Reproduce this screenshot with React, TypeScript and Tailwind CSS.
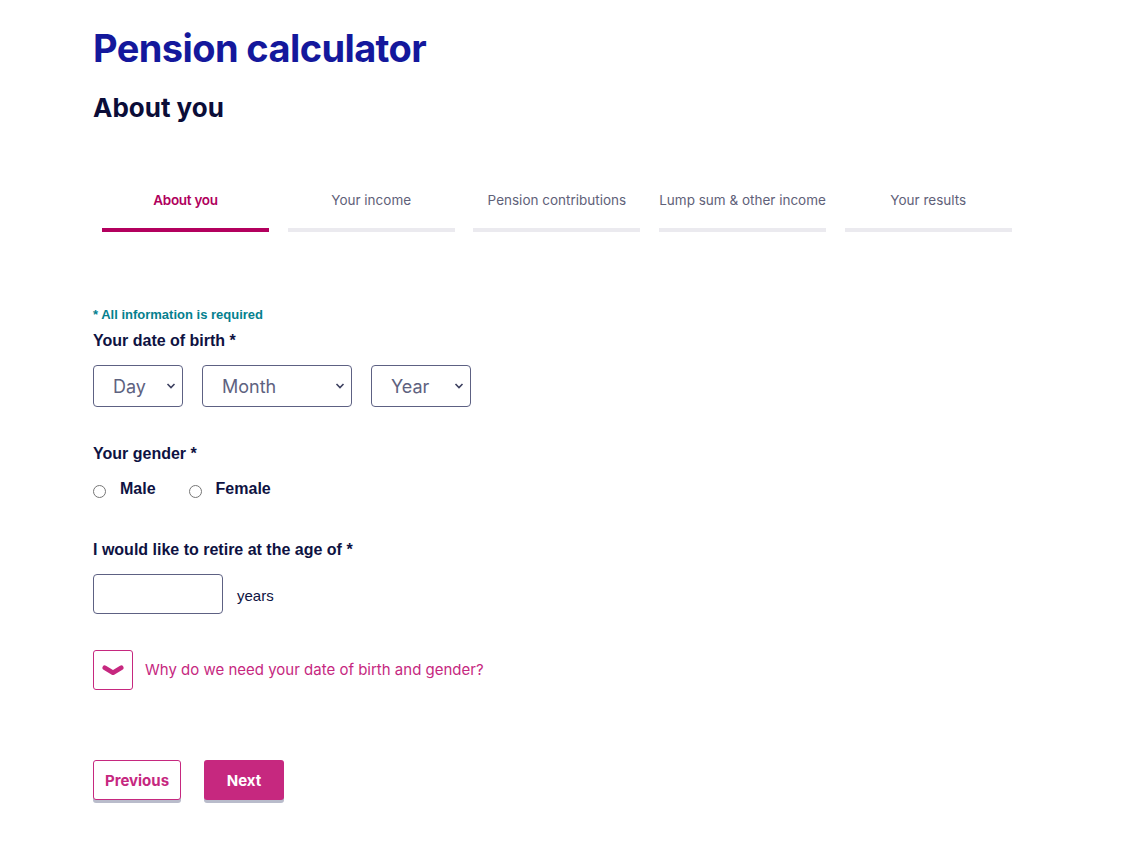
import { useState } from 'react'

const steps = ['About you', 'Your income', 'Pension contributions', 'Lump sum & other income', 'Your results']

const days = Array.from({ length: 31 }, (_, i) => String(i + 1))
const months = ['January', 'February', 'March', 'April', 'May', 'June', 'July', 'August', 'September', 'October', 'November', 'December']
const years = Array.from({ length: 60 }, (_, i) => String(2005 - i))

const heading = "font-['Inter',sans-serif]"
const label = "font-['Liberation_Sans',Arial,sans-serif] font-bold text-[16px] text-[#0e1242]"

function Select({ placeholder, options, width }: { placeholder: string; options: string[]; width: string }) {
  return (
    <div className={`relative ${width}`}>
      <select
        defaultValue=""
        className={`h-[42px] w-full appearance-none rounded-[4px] border border-[#5d6183] bg-white pl-[19px] pr-7 text-[18px] text-[#5e6280] ${heading} outline-none`}
      >
        <option value="" disabled>
          {placeholder}
        </option>
        {options.map((o) => (
          <option key={o}>{o}</option>
        ))}
      </select>
      <svg
        className="pointer-events-none absolute right-[7px] top-[17px] h-[8px] w-[10px]"
        viewBox="0 0 10 8"
        fill="none"
        stroke="#3d4160"
        strokeWidth="1.6"
      >
        <path d="M1.5 2 L5 5.5 L8.5 2" />
      </svg>
    </div>
  )
}

export default function App() {
  const [gender, setGender] = useState('')
  const [open, setOpen] = useState(false)

  return (
    <div className="min-h-[859px] w-full bg-white">
      <div className="pl-[93px] pt-[25px]">
        <h1 className={`${heading} text-[38px] font-bold leading-[46px] tracking-[-0.6px] text-[#14189c]`}>
          Pension calculator
        </h1>
        <h2 className={`${heading} mt-[21px] text-[26px] font-bold leading-[32px] text-[#0b0d38]`}>About you</h2>

        <div className="ml-[9px] mt-[68px] flex w-[910px] gap-[18.7px]">
          {steps.map((s, i) => (
            <div key={s} className="flex w-[167px] flex-col items-center">
              <span
                className={`${heading} text-[13.5px] leading-[16px] ${
                  i === 0 ? 'font-semibold tracking-[-0.3px] text-[#b0005c]' : 'text-[#5f6179]'
                }`}
              >
                {s}
              </span>
              <div className={`mt-[20px] h-[4px] w-full ${i === 0 ? 'bg-[#b3005e]' : 'bg-[#ebeaef]'}`} />
            </div>
          ))}
        </div>

        <p className="mt-[75px] font-['Liberation_Sans',Arial,sans-serif] text-[13px] font-bold leading-[16px] text-[#04808e]">
          * All information is required
        </p>
        <p className={`${label} mt-[9px] leading-[18px]`}>Your date of birth *</p>
        <div className="mt-[15px] flex gap-[19px]">
          <Select placeholder="Day" options={days} width="w-[90px]" />
          <Select placeholder="Month" options={months} width="w-[150px]" />
          <Select placeholder="Year" options={years} width="w-[100px]" />
        </div>

        <p className={`${label} mt-[38px] leading-[18px]`}>Your gender *</p>
        <div className="mt-[17px] flex items-center">
          {['Male', 'Female'].map((g) => (
            <label key={g} className="mr-[33px] flex cursor-pointer items-center">
              <span
                className="mt-[5px] grid h-[13px] w-[13px] place-items-center rounded-full border border-[#767676] bg-white"
                onClick={() => setGender(g)}
              >
                {gender === g && <span className="h-[7px] w-[7px] rounded-full bg-[#0e1242]" />}
              </span>
              <span className={`${label} ml-[14px] leading-[18px]`}>{g}</span>
            </label>
          ))}
        </div>

        <p className={`${label} mt-[43px] leading-[18px]`}>I would like to retire at the age of *</p>
        <div className="mt-[15px] flex items-center">
          <input
            type="text"
            className="h-[40px] w-[130px] rounded-[4px] border border-[#5d6183] px-3 text-[16px] outline-none"
          />
          <span className="ml-[14px] mt-[4px] font-['Liberation_Sans',Arial,sans-serif] text-[15px] text-[#0e1242]">
            years
          </span>
        </div>

        <button type="button" onClick={() => setOpen(!open)} className="mt-[36px] flex items-center">
          <span className="grid h-[40px] w-[40px] place-items-center rounded-[3px] border border-[#c6287f] bg-white">
            <svg viewBox="0 0 24 12" className={`h-[11px] w-[24px] ${open ? 'rotate-180' : ''}`} fill="none">
              <path d="M3 3 L12 8.5 L21 3" stroke="#c6287f" strokeWidth="5" strokeLinecap="round" strokeLinejoin="round" />
            </svg>
          </span>
          <span className={`${heading} ml-[12px] text-[15px] text-[#c6287f]`}>
            Why do we need your date of birth and gender?
          </span>
        </button>

        <div className="mt-[70px] flex gap-[23px]">
          <button
            type="button"
            className={`${heading} h-[40px] w-[88px] rounded-[3px] border border-[#c6287f] bg-white pt-[3px] text-[15px] font-bold text-[#c6287f] shadow-[0_3px_0_#b9bccb]`}
          >
            Previous
          </button>
          <button
            type="button"
            className={`${heading} h-[40px] w-[80px] rounded-[3px] bg-[#c6287f] pt-[3px] text-[15px] font-bold text-white shadow-[0_3px_0_#b9bccb]`}
          >
            Next
          </button>
        </div>
      </div>
    </div>
  )
}
